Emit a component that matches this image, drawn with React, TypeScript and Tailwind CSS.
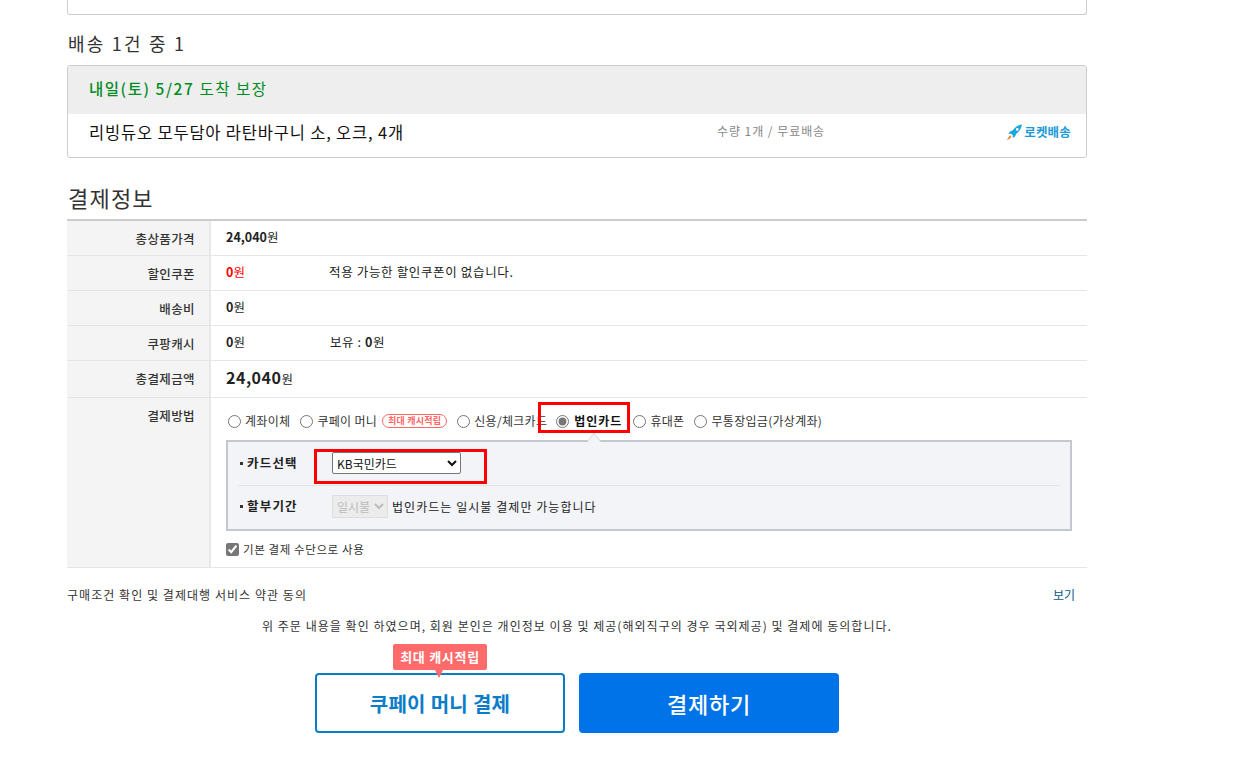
const font = { fontFamily: '"Noto Sans CJK KR", "Liberation Sans", sans-serif' };

type RowProps = {
  label: string;
  height: string;
  children: React.ReactNode;
};

function Row({ label, height, children }: RowProps) {
  return (
    <div className={`flex border-b border-[#e5e5e5] ${height}`}>
      <div className="w-[144px] shrink-0 bg-[#f4f4f4] border-r-2 border-[#e8e8e8] pr-[14px] pt-[10px] text-right text-[12.5px] leading-[16px] tracking-[0.4px] text-[#333] font-medium">
        {label}
      </div>
      <div className="flex-1 pl-[15px] pt-[8px] text-[12.5px] leading-[16px] text-[#222]">{children}</div>
    </div>
  );
}

function PayOption({ label, checked, bold }: { label: string; checked?: boolean; bold?: boolean }) {
  return (
    <label className="flex items-center">
      <input type="radio" name="pay" defaultChecked={checked} className="m-0 w-[13px] h-[13px] accent-[#777]" />
      <span className={`text-[12px] leading-[16px] ${bold ? "ml-[5px] font-bold text-[#111] tracking-[1px]" : "ml-[4px] text-[#333] tracking-[0.3px]"}`}>{label}</span>
    </label>
  );
}

function RocketBadge() {
  return (
    <div className="flex items-center gap-[1px]">
      <svg width="17" height="17" viewBox="0 0 16 17">
        <path d="M15.5 0.5C11.5 1 8.5 3 6 6.5L3.5 7.5L2 10L4.6 9.7L6.4 11.5L6.2 14L8.6 12.4L9.6 10C13 7.6 15 4.5 15.5 0.5Z" fill="#1ea7dd" />
        <path d="M3.6 11.2L5 12.6C4.2 14.2 2.6 15.6 0.6 16.2C1.2 14.2 2.2 12.2 3.6 11.2Z" fill="#f6893b" />
        <circle cx="10.8" cy="5.4" r="1.3" fill="#fff" />
      </svg>
      <span className="text-[12.5px] leading-[16px] tracking-[0.2px] font-bold text-[#1a9ad6]">로켓배송</span>
    </div>
  );
}

function Bullet() {
  return <span className="w-[3px] h-[3px] mr-[4px] bg-[#333]" />;
}

export default function App() {
  return (
    <div style={font} className="h-[768px] overflow-hidden bg-white relative">
      <div className="w-[1020px] ml-[67px]">
        <div className="h-[15px] border border-t-0 border-[#ccc] rounded-b-[3px]" />
        <h2 className="mt-[15px] ml-[1px] h-[28px] text-[18px] leading-[26px] tracking-[2.2px] font-normal text-[#333]">배송 1건 중 1</h2>
        <div className="mt-[7px] h-[93px] border border-[#ccc] rounded-[3px] overflow-hidden">
          <div className="h-[48px] bg-[#eee] pl-[21px] pt-[11px] text-[15.5px] leading-[22px] tracking-[1.55px] text-[#008c1f]">
            <span className="font-medium">내일(토) 5/27</span> 도착 보장
          </div>
          <div className="flex items-center h-[36px] pl-[21px] pr-[15px]">
            <span className="text-[16.5px] leading-[24px] tracking-[0.8px] text-[#111] w-[628px]">리빙듀오 모두담아 라탄바구니 소, 오크, 4개</span>
            <span className="text-[12px] leading-[16px] tracking-[0.95px] text-[#888] mb-[3px]">수량 1개 / 무료배송</span>
            <div className="ml-auto">
              <RocketBadge />
            </div>
          </div>
        </div>

        <h2 className="mt-[24px] ml-[1px] text-[22px] leading-[30px] tracking-[1.2px] font-normal text-[#333]">결제정보</h2>
        <div className="mt-[7px] border-t-2 border-[#ccc]">
          <Row label="총상품가격" height="h-[35px]">
            <span className="font-bold">24,040</span>원
          </Row>
          <Row label="할인쿠폰" height="h-[35px]">
            <div className="flex">
              <span className="w-[103px] text-[#f00]"><span className="font-bold">0</span>원</span>
              <span className="tracking-[0.65px]">적용 가능한 할인쿠폰이 없습니다.</span>
            </div>
          </Row>
          <Row label="배송비" height="h-[35px]">
            <span className="font-bold">0</span>원
          </Row>
          <Row label="쿠팡캐시" height="h-[35px]">
            <div className="flex">
              <span className="w-[104px]"><span className="font-bold">0</span>원</span>
              <span className="tracking-[0.6px]">보유 : <span className="font-bold">0</span>원</span>
            </div>
          </Row>
          <Row label="총결제금액" height="h-[37px]">
            <span className="text-[16px] font-bold tracking-[0.5px]">24,040</span>원
          </Row>
          <div className="flex h-[170px] border-b border-[#e5e5e5]">
            <div className="w-[144px] shrink-0 bg-[#f4f4f4] border-r-2 border-[#e8e8e8] pr-[14px] pt-[10px] text-right text-[12.5px] leading-[16px] tracking-[0.4px] text-[#333] font-medium">
              결제방법
            </div>
            <div className="flex-1 pl-[15px] pt-[15px]">
              <div className="flex items-center h-[16px] pl-[2px]">
                <PayOption label="계좌이체" />
                <div className="ml-[10px]">
                  <PayOption label="쿠페이 머니" />
                </div>
                <span className="ml-[5px] h-[14px] px-[5px] rounded-full border border-[#f66] text-[9px] leading-[12px] tracking-[0.2px] font-bold text-[#f66]">최대 캐시적립</span>
                <div className="ml-[10px]">
                  <PayOption label="신용/체크카드" />
                </div>
                <div className="ml-[9px]">
                  <PayOption label="법인카드" checked bold />
                </div>
                <div className="ml-[11px]">
                  <PayOption label="휴대폰" />
                </div>
                <div className="ml-[10px]">
                  <PayOption label="무통장입금(가상계좌)" />
                </div>
              </div>

              <div className="relative mt-[11px] w-[846px] h-[91px] border-2 border-[#c5c7cf] bg-[#f3f4f8] px-[10px]">
                <div className="flex items-center h-[44px] border-b border-[#e4e5ea]">
                  <div className="flex items-center w-[94px] pl-[2px] text-[12.5px] tracking-[1.2px] font-bold text-[#222]">
                    <Bullet />
                    카드선택
                  </div>
                  <select defaultValue="KB국민카드" className="w-[129px] h-[22px] mb-[1px] border border-[#767676] rounded-[2px] bg-white text-[12px] text-[#111]">
                    <option>KB국민카드</option>
                  </select>
                </div>
                <div className="flex items-center h-[41px]">
                  <div className="flex items-center w-[94px] pl-[2px] text-[12.5px] tracking-[1.2px] font-bold text-[#222]">
                    <Bullet />
                    할부기간
                  </div>
                  <select disabled className="w-[56px] h-[23px] border border-[#ddd] bg-[#ececec] text-[12px] text-[#bbb]">
                    <option>일시불</option>
                  </select>
                  <span className="ml-[4px] text-[12px] tracking-[1.05px] text-[#222]">법인카드는 일시불 결제만 가능합니다</span>
                </div>
                {/* panel arrow */}
                <svg className="absolute left-[359px] top-[-10px]" width="14" height="10" viewBox="0 0 14 10">
                  <path d="M0 10L7 1L14 10" fill="#f3f4f8" stroke="#d5d6dc" />
                </svg>
              </div>

              <label className="mt-[10px] flex items-center">
                <input type="checkbox" defaultChecked className="m-0 w-[13px] h-[13px] accent-[#777]" />
                <span className="ml-[4px] text-[11.5px] leading-[16px] tracking-[0.6px] text-[#333]">기본 결제 수단으로 사용</span>
              </label>
            </div>
          </div>
        </div>

        <div className="flex justify-between mt-[19px] pr-[12px] text-[12px] leading-[16px] text-[#333]">
          <span className="tracking-[1.05px]">구매조건 확인 및 결제대행 서비스 약관 동의</span>
          <span className="text-[#0a5a8c]">보기</span>
        </div>
        <p className="mt-[15px] pl-[195px] text-[12px] leading-[16px] tracking-[1.03px] text-[#333]">
          위 주문 내용을 확인 하였으며, 회원 본인은 개인정보 이용 및 제공(해외직구의 경우 국외제공) 및 결제에 동의합니다.
        </p>

        <div className="flex mt-[39px] pl-[248px] gap-[14px]">
          <button className="relative w-[250px] h-[60px] border-2 border-[#0a7cc8] rounded-[4px] bg-white pt-[2px] text-[20px] tracking-[0.3px] font-bold text-[#0a7cc8]">
            쿠페이 머니 결제
            <span className="absolute left-[76px] top-[-31px] w-[94px] h-[26px] rounded-[2px] bg-[#ff6b6b] text-[13px] leading-[26px] tracking-[0.7px] font-bold text-white">
              최대 캐시적립
              <span className="absolute left-[42px] top-[26px] w-0 h-0 border-x-[4px] border-x-transparent border-t-[8px] border-t-[#ff6b6b]" />
            </span>
          </button>
          <button className="w-[260px] h-[60px] rounded-[4px] bg-[#0073e9] text-[22px] tracking-[0.8px] font-medium text-white">결제하기</button>
        </div>
      </div>

      {/* red annotation boxes */}
      <div className="absolute left-[538px] top-[402px] w-[92px] h-[31px] border-[3px] border-[#f00]" />
      <div className="absolute left-[314px] top-[449px] w-[173px] h-[35px] border-[3px] border-[#f00]" />
    </div>
  );
}
